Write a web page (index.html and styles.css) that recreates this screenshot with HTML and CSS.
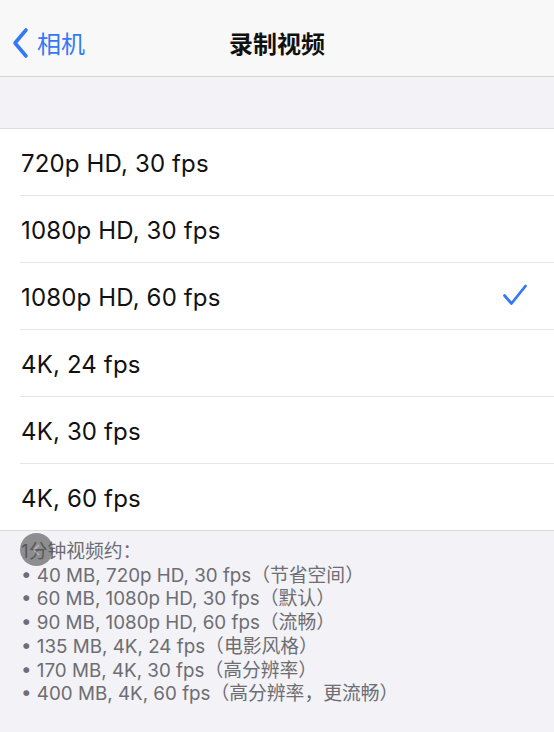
FILE: index.html
```html
<!DOCTYPE html>
<html lang="zh-CN">
<head>
<meta charset="utf-8">
<link rel="stylesheet" href="styles.css">
</head>
<body>
<div class="screen">
  <header class="nav">
    <div class="back">
      <svg class="chev" width="18" height="32" viewBox="0 0 18 32"><path d="M15 3 L4 16 L15 29" fill="none" stroke="#3478f6" stroke-width="3.6" stroke-linecap="round" stroke-linejoin="round"/></svg>
      <span class="back-label">相机</span>
    </div>
    <div class="title">录制视频</div>
  </header>
  <div class="gap"></div>
  <ul class="list">
    <li class="row"><span>720p HD, 30 fps</span></li>
    <li class="row"><span>1080p HD, 30 fps</span></li>
    <li class="row"><span>1080p HD, 60 fps</span><svg class="check" width="26" height="24" viewBox="0 0 26 24"><path d="M2.5 12.5 L9.5 20.5 L23.5 3" fill="none" stroke="#3478f6" stroke-width="2.8" stroke-linecap="round" stroke-linejoin="round"/></svg></li>
    <li class="row"><span>4K, 24 fps</span></li>
    <li class="row"><span>4K, 30 fps</span></li>
    <li class="row"><span>4K, 60 fps</span></li>
  </ul>
  <div class="footer">
    <p>1分钟视频约：</p>
    <p>• 40 MB, 720p HD, 30 fps（节省空间）</p>
    <p>• 60 MB, 1080p HD, 30 fps（默认）</p>
    <p>• 90 MB, 1080p HD, 60 fps（流畅）</p>
    <p>• 135 MB, 4K, 24 fps（电影风格）</p>
    <p>• 170 MB, 4K, 30 fps（高分辨率）</p>
    <p>• 400 MB, 4K, 60 fps（高分辨率，更流畅）</p>
    <div class="touch"><svg width="12" height="14" viewBox="0 0 12 14"><path d="M8 2 L3 7 L8 12" fill="none" stroke="rgba(255,255,255,0.35)" stroke-width="1.6"/></svg></div>
  </div>
</div>
</body>
</html>
```

FILE: styles.css
```css
* { box-sizing: border-box; }
html, body { margin: 0; padding: 0; }
body {
  width: 554px;
  height: 732px;
  overflow: hidden;
  background: #f2f2f7;
  font-family: "Inter", "Noto Sans CJK SC", sans-serif;
  color: #111;
}
.screen { display: flex; flex-direction: column; }
.nav {
  height: 77px;
  background: #f8f8f8;
  border-bottom: 1px solid #d4d4d6;
  position: relative;
  display: flex;
  align-items: center;
  justify-content: center;
}
.back {
  position: absolute;
  left: 11px;
  top: 27px;
  display: flex;
  align-items: center;
  gap: 8px;
  color: #3478f6;
}
.back-label {
  font-family: "Noto Sans CJK SC", sans-serif;
  font-size: 24px;
  line-height: 32px;
}
.title {
  font-family: "Noto Sans CJK SC", sans-serif;
  font-weight: 700;
  font-size: 24px;
  line-height: 30px;
  margin-top: 10px;
  color: #111;
}
.gap { height: 51px; }
.list {
  list-style: none;
  margin: 0;
  padding: 0 0 0 20px;
  background: #fff;
  border-top: 1px solid #dcdcde;
  border-bottom: 1px solid #dcdcde;
}
.row {
  height: 67px;
  display: flex;
  align-items: center;
  justify-content: space-between;
  padding: 2px 26px 0 1px;
  font-size: 24px;
  font-weight: 400;
  letter-spacing: 0.15px;
  border-bottom: 1px solid #e6e6e8;
}
.row:last-child { border-bottom: none; height: 66px; }
.check { margin-top: -4px; }
.footer {
  position: relative;
  padding: 9px 0 0 21px;
  color: #6d6d72;
  font-size: 18.8px;
  line-height: 23.7px;
}
.footer p { margin: 0; }
.touch {
  position: absolute;
  left: 20px;
  top: 2px;
  width: 33px;
  height: 33px;
  border-radius: 50%;
  background: rgba(75, 75, 75, 0.6);
  display: flex;
  align-items: center;
  justify-content: center;
}
```
